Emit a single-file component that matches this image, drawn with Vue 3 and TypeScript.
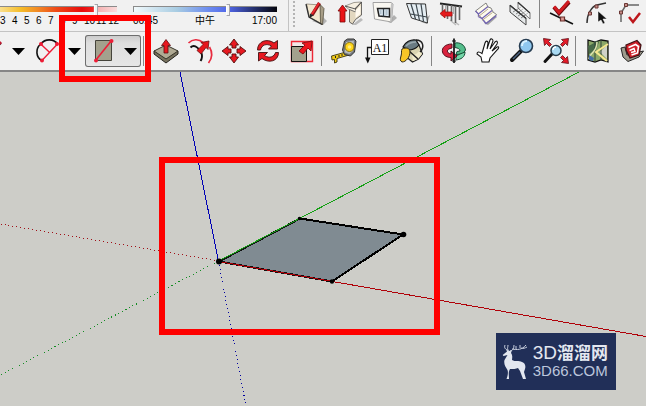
<script setup lang="ts">
import { ref } from 'vue'

interface Tool {
  label: string
  art: string
}

const month = ref(83)
const time = ref(66)
const months = Array.from({ length: 10 }, (_, i) => i + 3)

const solidTools: Tool[] = [
  {
    label: 'Draw wall',
    art: `<path d="M9 21l11 4 4-4-4-4z" fill="#b5b5b5"/><path d="M3.500 4l14 1 1 18.500L6 17z" fill="#f3e8d0" stroke="#8a8372" stroke-width=".8"/><path d="M17 4.500l4 4L19.500 25l-2-2z" fill="#a89e88" stroke="#55503f" stroke-width=".8"/><path d="M3 4l3 13 13 7.500" fill="none" stroke="#333" stroke-width="1.300"/><path d="M16.500 3L9 15" stroke="#8a1418" stroke-width="3.400"/><path d="M16 3L9 14" stroke="#ef2a2e" stroke-width="1.800"/><path d="M7 13.500L6.500 18l4-2.500z" fill="#222"/>`
  },
  {
    label: 'Raise wall',
    art: `<path d="M15 25l9-7 2 2-7 5z" fill="#bbb"/><path d="M8 6l9-3.500L24.500 2v13l-6 4-3 5-3-2V10z" fill="#f6efe0" stroke="#8a857a" stroke-width=".8"/><path d="M12.500 9.500l6 2.500v-4l6-6V15l-6 4.500-3 4.500-3-2z" fill="#e3d8c0" stroke="#555" stroke-width=".8"/><path d="M8 6l10.500 3 6-7" stroke="#444" fill="none" stroke-width=".9"/><path d="M18.500 10.500l5-5V14l-5 4z" fill="#fffaf0"/><path d="M5.500 5l4.500 6H8v11H3V11H1z" fill="#e91318" stroke="#7b0808" stroke-width=".8"/>`
  },
  {
    label: 'Window opening',
    art: `<path d="M17 22l6-7 3 3-6 5z" fill="#b0b0b0"/><path d="M2 2.500h18l2 1.500-1.500 18L3.500 19z" fill="#faf8f2" stroke="#9a9a9a" stroke-width=".9"/><path d="M20 3l2 1-1.500 18-1.500-1z" fill="#c3c3c3"/><path d="M6.500 8.500h12v8.500l-10.500-1z" fill="#dbe7ef" stroke="#222" stroke-width="1.500"/><path d="M12.500 9v7.500" fill="none" stroke="#33424c" stroke-width="1.200"/><path d="M8.500 10h2v4h-1.500zM14.500 10h2v5h-2z" fill="#b5c5d0"/>`
  },
  {
    label: 'Curtain wall',
    art: `<path d="M16 22l9-7-3 9z" fill="#a8a8a8"/><path d="M1.500 3.500l19 .5L22.500 23 6.500 18z" fill="#e4edf2" stroke="#333"/><path d="M6 4l4.500 15M11 4l3.500 16.500M16 4l2.500 17.500M5.500 14l16.500 3" fill="none" stroke="#3c464d" stroke-width="1.200"/>`
  },
  {
    label: 'Railing',
    art: `<path d="M11 20l6 5M16 22l4 3" stroke="#bbb" stroke-width="1.500"/><path d="M1 3.500l22 3" stroke="#222" stroke-width="2"/><path d="M3.500 4v12M8.500 5v14M12.500 5v16M16.500 6v17M20.500 6v14" stroke="#666" stroke-width="1.600" fill="none"/><path d="M6.500 5v8M14.500 6v8" stroke="#aaa" fill="none"/><path d="M1 13.500l5-4v2.500h7v4H6v2z" fill="#e51b1d" stroke="#a11" stroke-width=".8"/>`
  },
  {
    label: 'Stairs',
    art: `<path d="M11 23l4 2 9-8-3-1z" fill="#a5a5a5"/><path d="M2.500 11L13 3l2 4 3 1 2 4 3.500 2.500L13 23.500z" fill="#fdfbee" stroke="#666" stroke-width=".8"/><path d="M2.500 11l3 3 9.500-7.500M5.500 14v2.500l3.500 2L19 10.500M9 18.500l4 5 10.500-8" fill="none" stroke="#7466b4" stroke-width="1.300"/><path d="M5.500 16.500L15 9M9 20.500l10.500-8" fill="none" stroke="#b8aa8a"/>`
  },
  {
    label: 'Escalator',
    art: `<path d="M3 5v7l16 13v-7z" fill="#e6e9ea" stroke="#444"/><path d="M6 12l8-5M9 14l7-5M11 16l8-5M14 18l7-5" fill="none" stroke="#777" stroke-width=".9"/><path d="M11 2l12 11v6L11 8z" fill="#f8fafa" fill-opacity=".5" stroke="#666" stroke-width=".9"/><path d="M3 5.500l16 13M11 2.500L23 13" fill="none" stroke="#333" stroke-width="1.200"/>`
  }
]

const editTools: Tool[] = [
  {
    label: 'Validate point',
    art: `<path d="M1 13l23 11" stroke="#111" stroke-width="1.600"/><path d="M5 7l5 6L20 2" fill="none" stroke="#6e0c10" stroke-width="4.200"/><path d="M5 6.500l5 6L20 1" fill="none" stroke="#d21a20" stroke-width="2.800"/><path d="M11.500 17h4v4h-4z" fill="#dc9a95" stroke="#6b302d" stroke-width="1.200"/>`
  },
  {
    label: 'Select vertex',
    art: `<path d="M4 23c0-9 5-17 10-18l9-2" fill="none" stroke="#333" stroke-width="1.500"/><path d="M5.500 12h3v3h-3zM12 5h3v3h-3z" fill="#c78e88" stroke="#6a3734"/><path d="M15 11v11l3-2 2 4 2-1-2-4h4z" fill="#111" stroke="#fff" stroke-width=".5"/>`
  },
  {
    label: 'Close curve',
    art: `<path d="M4 22v-9l5-8h13" fill="none" stroke="#666" stroke-width="1.500"/><path d="M2.500 11h3v3h-3zM7.500 3.500h3v3h-3z" fill="#c78e88" stroke="#6a3734"/><path d="M12 17l4 5 7-9" fill="none" stroke="#bd171c" stroke-width="2.500"/>`
  }
]

const pencilArt = `<path d="M2 24L24 5" stroke="#222" stroke-width="2"/><path d="M21 7l3-3" stroke="#c01830" stroke-width="3"/>`
const arcArt = `<path d="M8.700 22.700C3 19 2 11 7.700 6c5-6 13-5 17 0" fill="none" stroke="#111" stroke-width="1.600"/><path d="M7.700 6l9 8.500M24.500 6L8.700 22.700" fill="none" stroke="#ed1d36" stroke-width="1.400"/><g fill="#ed1d36"><circle cx="8" cy="6" r="2"/><circle cx="24" cy="6" r="2"/><circle cx="9" cy="22.500" r="2"/></g>`
const rectangleArt = `<path d="M6.500 2.500h16v20h-16z" fill="#a3a18d" stroke="#45443b"/><path d="M6.500 22.500l16-20" stroke="#ed1d36" stroke-width="1.600"/><circle cx="7" cy="22.500" r="2" fill="#ed1d36"/><circle cx="22.500" cy="3" r="2" fill="#ed1d36"/>`

const drawGroups = [
  { label: 'Line', art: pencilArt, pressed: false },
  { label: 'Arc', art: arcArt, pressed: false },
  { label: 'Rectangle', art: rectangleArt, pressed: true }
]

const modifyTools: Tool[] = [
  {
    label: 'Push/Pull',
    art: `<path d="M1 13v3l12 9 12-9v-3z" fill="#77715d" stroke="#24231e"/><path d="M1 13l12-6 12 6-12 8z" fill="#b0aa94" stroke="#353329"/><path d="M13 1.500l4.500 6H15V15h-4V7.500H8.500z" fill="#e61920" stroke="#5e0e10" stroke-width=".8"/>`
  },
  {
    label: 'Offset',
    art: `<path d="M1.500 5c4-4 10-4.500 14.500-.5M22.500 9c3.500 6 3 11-1 16" fill="none" stroke="#e82b3f" stroke-width="1.700"/><path d="M3.500 9.500c3-3 7-1 9 3M14.500 15c1 3 1 5-1 8" fill="none" stroke="#111" stroke-width="1.900"/><path d="M22 3l-1 8.500-2-2-5 6.500-4-3.500 6-6-2-2z" fill="#e7151c" stroke="#6b1010" stroke-width=".8"/>`
  },
  {
    label: 'Move',
    art: `<path d="M13 1l4.500 6H15v3h-4V7H8.500zM13 25l-4.500-6H11v-3h4v3h2.500zM1 13l6-4.500V11h3v4H7v2.500zM25 13l-6 4.500V15h-3v-4h3V8.500z" fill="#e71921" stroke="#54100f" stroke-width=".9"/>`
  },
  {
    label: 'Rotate',
    art: `<path d="M2.500 12c0-9 10-12 16.500-7l3.500-2.500V11h-9l3-3c-5-3-10-1-11 4z" fill="#e71921" stroke="#431313" stroke-width=".9"/><path d="M23.500 14.500c0 9-10 11-16.500 6L3.500 23v-8.500h9l-3 3c5 3.500 10 1 11-3z" fill="#e71921" stroke="#431313" stroke-width=".9"/>`
  },
  {
    label: 'Scale',
    art: `<path d="M2.500 3.500h21v20h-21z" fill="#f2e7e7" stroke="#ed2635" stroke-width="1.400"/><path d="M2.500 8.500h15v15h-15z" fill="#a3a18d" stroke="#111"/><path d="M23 3l-1 10-3-3-5 6-4-3 6-6-3-2z" fill="#ed151d" stroke="#8d1014"/>`
  }
]

const measureTools: Tool[] = [
  {
    label: 'Tape measure',
    art: `<path d="M.5 18L15 14l3 3-12 3.500V24l-2.500 1v-3.500L1 22z" fill="#efc817" stroke="#3a3410" stroke-width=".9"/><path d="M4.500 18v2M8 17v2M11 16v2" stroke="#222"/><path d="M13.500 3l3-2H23l2 2-1.500 11-4 4-6-1.500L11.500 12z" fill="#74787c" stroke="#333"/><path d="M15 4l8-1.500L22 13l-3.500 3-5-1.500z" fill="#b4b9bd"/><circle cx="18.500" cy="9" r="4.500" fill="#ffd51b" stroke="#8a7410"/><circle cx="18.500" cy="9" r="1.800" fill="#ffec80"/>`
  },
  {
    label: 'Text',
    art: `<path d="M6.500 1.500h17v15h-17z" fill="#fff" stroke="#222"/><text x="15" y="13.500" text-anchor="middle" font-family="Liberation Serif, serif" font-size="12" fill="#111">A1</text><path d="M6 9.500H2.500v11" fill="none" stroke="#111" stroke-width="1.300"/><path d="M0 19.500h5.500l-2.700 6z" fill="#111"/>`
  },
  {
    label: 'Paint bucket',
    art: `<path d="M10 11l10-4 3.500 9-4 5-6 3-5-4z" fill="#d9d4b0" stroke="#222" stroke-width="1.200"/><path d="M13 17c3 0 6-2 8-5l2 4-4 5-5 2z" fill="#f2eccb"/><path d="M4 9c2-5 8-8 13-7l3 5c-3 4-7 5-11 5z" fill="#6a7b82" stroke="#111" stroke-width="1.200"/><path d="M7 8c3-3 7-4 10-4" stroke="#9aa9af" stroke-width="1.500" fill="none"/><path d="M17 2c7 0 9 7 4 12M10 13l9 8" fill="none" stroke="#222" stroke-width="1.500"/><path d="M3 11c4-2 8-1 8 3 0 5-4 10-8 10-2-1-2-3-1-6s0-5 1-7z" fill="#f8c627" stroke="#312b17"/>`
  }
]

const cameraTools: Tool[] = [
  {
    label: 'Orbit',
    art: `<path d="M14 5c5-1 10 2 10.500 7L22 16l-7 .5 1-3 3-.5c0-2-2-3-5-3.500z" fill="#54bd8b" stroke="#164c35"/><path d="M24 14c0 5-4 7.500-9 8v-4l4-2z" fill="#74d7a9" stroke="#164c35"/><path d="M11 6C4 6 .5 10 1.500 14c1 4 5 5.500 8.500 5.500V23l6-5-6-5v3c-5-1-5-5 1-6z" fill="#d9223d" stroke="#55101d"/><path d="M13 .5V25" stroke="#111" stroke-width="1.700"/><path d="M11 3h4M11 23h4" stroke="#111"/>`
  },
  {
    label: 'Pan',
    art: `<path d="M7 24l-1-5-4-3c0-2.500 2-2.500 5-.5L10 5c1-3 3-2 3 0l-1 6 3-9c1-2 3-1 3 1l-3 8 5-7c2-2 3 0 2 2l-5 7 5-4c2-1 2 1 1 2l-8 9-1 4z" fill="#fff" stroke="#151515" stroke-width="1.100"/>`
  },
  {
    label: 'Zoom',
    art: `<path d="M12 13l-9 9" stroke="#111" stroke-width="4" stroke-linecap="round"/><path d="M11 14l-7 7" stroke="#4b6382" stroke-width="1.500"/><circle cx="17" cy="8" r="6.500" fill="#90c8ef" stroke="#253b50" stroke-width="1.600"/><path d="M13 8c0-3 2-5 5-5" stroke="#d9f2ff" stroke-width="2" fill="none"/>`
  },
  {
    label: 'Zoom extents',
    art: `<path d="M9 16l-7 7.500" stroke="#111" stroke-width="3" stroke-linecap="round"/><circle cx="13" cy="12.500" r="5" fill="#a9daf3" stroke="#263d4c" stroke-width="1.500"/><path d="M10 12c0-2 1-3 3-3" stroke="#fff" stroke-width="1.300" fill="none"/><path d="M.5.5l7 1-2 2L8.500 6.500l-2 2L3.500 5.500l-2 2zM25.500.5l-1 7-2-2-3 3-2-2 3-3-2-2zM25.500 25.500l-7-1 2-2-3-3 2-2 3 3 2-2z" fill="#e51b28" stroke="#5c1018" stroke-width=".8"/>`
  }
]

const warehouseTools: Tool[] = [
  {
    label: 'Add location',
    art: `<path d="M3 2l7 2 6-2 7 1v21l-7-2-6 2-7-2z" fill="#8ba868" stroke="#111" stroke-width="1.300"/><path d="M3 8c5-2 6-3 8-5l3 1-3 8-7 4z" fill="#476948"/><path d="M15 14l7 7v-14z" fill="#cfd2c8"/><path d="M10 4v20M16 2v20" stroke="#314339"/><path d="M23 6L11 14l11 9" fill="none" stroke="#f7e890" stroke-width="2"/><path d="M4 21c0-6 8-6 8-17" fill="none" stroke="#dfe3b0" stroke-width="1.500"/><path d="M4 17l5 3-1 3-4-1z" fill="#466fa5"/>`
  },
  {
    label: '3D Warehouse',
    art: `<path d="M2 10l4-1 2 8 12-3 4.500-1L20 19 9 23.500 4 19z" fill="#9e9b8c" stroke="#252525"/><path d="M7 7l11-4.500L22 7l-2 10-9 3-4-8z" fill="#ce2028" stroke="#3e1114" stroke-width="1.200"/><path d="M9.500 9.500l7-3 3 2-1 6.500-6 2" fill="none" stroke="#fff" stroke-width="1.600"/><path d="M10.500 12.500l4.500-2 1 3-4 1" fill="none" stroke="#fff" stroke-width="1.400"/>`
  }
]

const mainSections = [modifyTools, measureTools, cameraTools, warehouseTools]
</script>

<template>
  <main class="app">
    <div class="toolbar toolbar-top">
      <div class="shadows">
        <div class="slider-date">
          <input v-model="month" class="range range-date" type="range" min="0" max="100" aria-label="Date" />
          <div class="months">
            <span v-for="m in months" :key="m">{{ m }}</span>
          </div>
        </div>
        <div class="slider-time">
          <input v-model="time" class="range range-time" type="range" min="0" max="100" aria-label="Time" />
          <div class="times"><span>06:45</span><span>中午</span><span>17:00</span></div>
        </div>
      </div>
      <div class="grip"></div>
      <button v-for="t in solidTools" :key="t.label" class="tool" type="button" :aria-label="t.label">
        <svg class="icon" viewBox="0 0 26 26" v-html="t.art"></svg>
      </button>
      <div class="separator"></div>
      <button v-for="t in editTools" :key="t.label" class="tool" type="button" :aria-label="t.label">
        <svg class="icon" viewBox="0 0 26 26" v-html="t.art"></svg>
      </button>
    </div>

    <div class="toolbar toolbar-main">
      <div v-for="g in drawGroups" :key="g.label" class="group" :class="{ pressed: g.pressed }">
        <button class="tool" type="button" :aria-label="g.label" :aria-pressed="g.pressed">
          <svg class="icon" viewBox="0 0 26 26" v-html="g.art"></svg>
        </button>
        <button class="more" type="button" :aria-label="g.label + ' options'">
          <svg class="caret" viewBox="0 0 13 7"><path d="M0 0h13L6.500 7z" /></svg>
        </button>
        <div v-if="g.pressed" class="callout"></div>
      </div>
      <template v-for="(section, i) in mainSections" :key="i">
        <div class="separator"></div>
        <button v-for="t in section" :key="t.label" class="tool" type="button" :aria-label="t.label">
          <svg class="icon" viewBox="0 0 26 26" v-html="t.art"></svg>
        </button>
      </template>
    </div>

    <section class="viewport">
      <svg class="scene" viewBox="0 72 646 334" preserveAspectRatio="xMidYMid slice">
        <path d="M219 261L300 218 403 234 332 281z" fill="#808b92" />
        <g class="lines">
          <path d="M300 218.500L403 234.500 332 281.500" stroke="#000" stroke-width="2" />
          <path d="M300 218.500L219 261.500 332 281.500" stroke="#111" stroke-width="2" />
          <path d="M218.500 261L180 72" stroke="#0000b4" />
          <path d="M218.500 261L299.500 218.500 579 72" stroke="#14a014" />
          <path d="M218.500 261.500L646 336.500" stroke="#b00008" />
          <g stroke-dasharray="1 3">
            <path d="M218.500 261L246 406" stroke="#0000a0" />
            <path d="M218.500 261L0 375.500" stroke="#148c24" />
            <path d="M218.500 261L0 224" stroke="#a01018" />
          </g>
        </g>
        <circle cx="219" cy="261.500" r="3" />
        <circle cx="403.500" cy="234.500" r="2.800" />
        <circle cx="332" cy="281.500" r="2.200" />
        <circle cx="299.500" cy="218.500" r="1.800" />
        <rect x="162" y="160" width="275" height="172" fill="none" stroke="#fe0000" stroke-width="6" />
      </svg>

      <div class="brand">
        <svg class="deer" viewBox="0 0 28 36">
          <path
            d="M.7 11L5 7.500l-1-2.500 3 2 3-1-1 3c2 3 1 5 1 7 3 2 7 0 10 2 3 1 4 4 3 7l-1 3 2 7h-3l-3-8-2-3c-2 1-5 1-8 1-2 3-1 7-1 10H4.500c1-3 2-6 1-9-2-3-4-6-3-10l3-5-4 1z"
          />
          <path
            class="antler"
            d="M7 7C3 5 2 4 3 1M6 6c-1-2 0-3 0-5M8 7c3 0 4-3 4-6M10 5c5 1 10 1 14-4M14 5V2M18 4V1M19 4c2 1 4 0 6-1"
          />
        </svg>
        <div class="brand-text">
          <div class="brand-name">3D<span>溜溜网</span></div>
          <div class="brand-site">3D66.COM</div>
        </div>
      </div>
    </section>
  </main>
</template>

<style>
body {
  margin: 0;
}
</style>

<style scoped>
.app {
  display: flex;
  flex-direction: column;
  height: 100vh;
  overflow: hidden;
  font-family: "Liberation Sans", "Noto Sans CJK SC", sans-serif;
  color: #111;
  background: #cdcdc8;
}

.toolbar {
  display: flex;
  flex: none;
  box-sizing: border-box;
  background: #f1f1f1;
}

.toolbar-top {
  height: 32px;
  border-bottom: 1px solid #c3c3c3;
}

.toolbar-main {
  position: relative;
  z-index: 1;
  height: 40px;
  align-items: center;
  padding-left: 1px;
  border-bottom: 2px solid #868686;
}

.toolbar-main .group:first-child {
  margin-left: -28px;
}

.shadows {
  display: flex;
  flex: none;
  gap: 16px;
  padding: 3px 11px 0 0;
  border-right: 1px solid #c3c3c3;
  font-size: 10px;
  line-height: 12px;
  color: #000;
}

.slider-date {
  width: 117px;
}

.slider-time {
  width: 144px;
}

.range {
  display: block;
  width: 100%;
  height: 12px;
  margin: 0;
  appearance: none;
  background: none;
}

.range::-webkit-slider-runnable-track {
  height: 6px;
  border-top: 1px solid #8b8b8b;
  box-sizing: border-box;
}

.range-date::-webkit-slider-runnable-track {
  background: linear-gradient(90deg, #fbe08c 0%, #f5bc28 18%, #f28a24 32%, #ee4a18 48%, #e80c0c 70%, #f02020 79%, #f5b0b0 83%, #fbdcdc 100%);
}

.range-time::-webkit-slider-runnable-track {
  border-left: 1px solid #8b8b8b;
  background: linear-gradient(90deg, #f2fafc 0%, #a8cce2 30%, #6c8cf0 52%, #5066e8 66%, #25306e 84%, #04040c 100%);
}

.range::-webkit-slider-thumb {
  width: 4px;
  height: 12px;
  margin-top: -3px;
  appearance: none;
  background: #f4f4f4;
  border: 1px solid #a5a5ab;
  border-left-color: #fff;
}

.months {
  display: grid;
  grid-template-columns: repeat(10, 12px);
}

.times {
  display: flex;
  justify-content: space-between;
}

.grip {
  flex: none;
  width: 2px;
  margin: 1px 4px 2px;
  background: repeating-linear-gradient(180deg, #b4b4b4 0 2px, transparent 2px 4px);
}

.tool,
.more {
  display: flex;
  flex: none;
  align-items: center;
  justify-content: center;
  padding: 0;
  border: 0;
  background: none;
}

.tool {
  width: 34px;
}

.toolbar-top .tool {
  height: 26px;
}

.icon {
  display: block;
  width: 26px;
  height: 26px;
  overflow: visible;
}

.group {
  position: relative;
  display: flex;
  flex: none;
  height: 32px;
}

.more {
  width: 22px;
}

.caret {
  width: 13px;
  height: 7px;
}

.pressed {
  border-radius: 3px;
  background: linear-gradient(180deg, #c9c9c9, #dedede 25%, #e6e6e6);
  box-shadow: inset 0 0 0 1px #6e6e6e;
}

.callout {
  position: absolute;
  inset: -20px -10px -15px -26px;
  border: 6px solid #fe0000;
  pointer-events: none;
}

.separator {
  flex: none;
  width: 8px;
  height: 30px;
  background: linear-gradient(#858585, #858585) 2px 0 / 1px 100% no-repeat;
}

.toolbar-top .separator {
  height: 28px;
}

.viewport {
  position: relative;
  flex: 1;
  min-height: 0;
}

.scene {
  display: block;
  width: 100%;
  height: 100%;
}

.lines {
  fill: none;
  shape-rendering: crispEdges;
}

.brand {
  position: absolute;
  right: 30px;
  bottom: 16px;
  display: flex;
  align-items: center;
  gap: 3px;
  box-sizing: border-box;
  height: 57px;
  padding: 0 8px 0 6px;
  color: #e3e7f0;
  background: #212f58;
}

.deer {
  width: 28px;
  height: 36px;
  fill: #e3e7f0;
}

.antler {
  fill: none;
  stroke: #c9d0df;
  stroke-width: 1;
}

.brand-name {
  font-size: 19px;
  line-height: 18px;
  white-space: nowrap;
}

.brand-name span {
  font-size: 17px;
  font-weight: 700;
}

.brand-site {
  font-size: 15px;
  line-height: 16px;
  color: #bcc6dc;
}
</style>
